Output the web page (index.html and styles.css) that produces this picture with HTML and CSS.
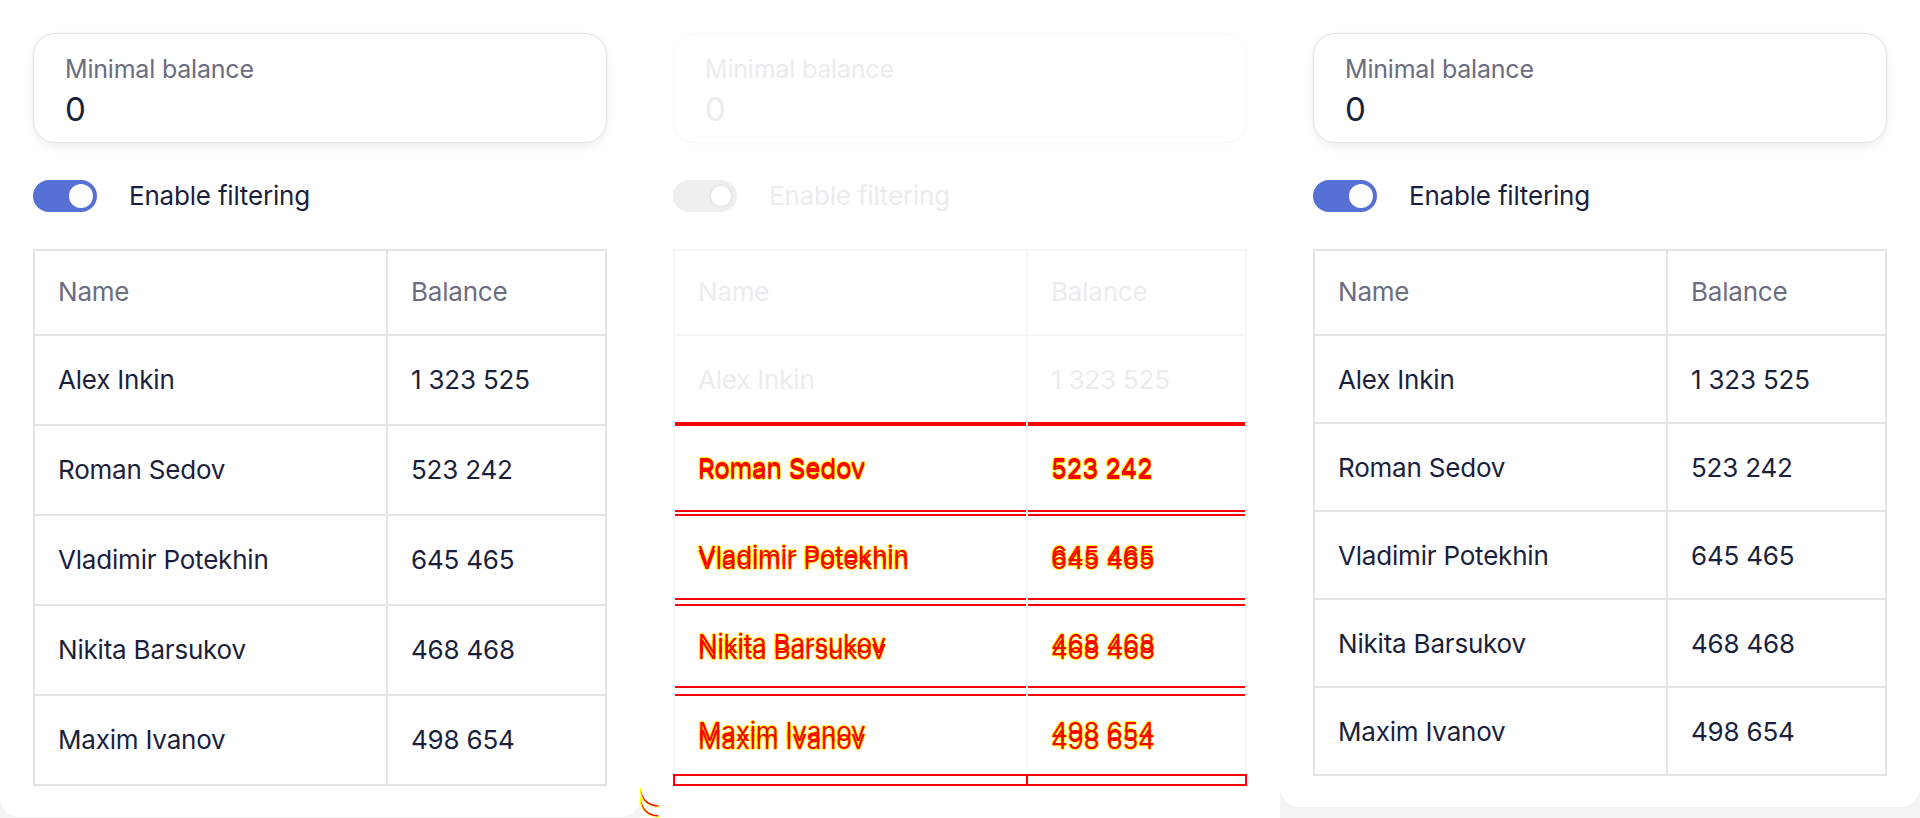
FILE: index.html
```html
<!DOCTYPE html>
<html lang="en">
<head>
<meta charset="utf-8">
<title>Table filtering</title>
<link rel="stylesheet" href="styles.css">
</head>
<body>
<div class="board">
  <!-- Panel 1 -->
  <section class="panel panel-tall">
    <div class="field">
      <div class="field-label">Minimal balance</div>
      <div class="field-value">0</div>
    </div>
    <div class="toggle-row">
      <span class="toggle"><span class="knob"></span></span>
      <span class="toggle-text">Enable filtering</span>
    </div>
    <table class="grid">
      <thead>
        <tr><th class="c1">Name</th><th>Balance</th></tr>
      </thead>
      <tbody>
        <tr><td>Alex Inkin</td><td>1 323 525</td></tr>
        <tr><td>Roman Sedov</td><td>523 242</td></tr>
        <tr><td>Vladimir Potekhin</td><td>645 465</td></tr>
        <tr><td>Nikita Barsukov</td><td>468 468</td></tr>
        <tr><td>Maxim Ivanov</td><td>498 654</td></tr>
      </tbody>
    </table>
  </section>

  <!-- Panel 2: visual diff -->
  <section class="panel panel-diff">
    <div class="field">
      <div class="field-label">Minimal balance</div>
      <div class="field-value">0</div>
    </div>
    <div class="toggle-row">
      <span class="toggle"><span class="knob"></span></span>
      <span class="toggle-text">Enable filtering</span>
    </div>
    <table class="grid">
      <thead>
        <tr><th class="c1">Name</th><th>Balance</th></tr>
      </thead>
      <tbody>
        <tr><td>Alex Inkin</td><td>1 323 525</td></tr>
        <tr class="d d1"><td><span class="dt">Roman Sedov</span></td><td><span class="dt">523 242</span></td></tr>
        <tr class="d d2"><td><span class="dt">Vladimir Potekhin</span></td><td><span class="dt">645 465</span></td></tr>
        <tr class="d d3"><td><span class="dt">Nikita Barsukov</span></td><td><span class="dt">468 468</span></td></tr>
        <tr class="d d4"><td><span class="dt">Maxim Ivanov</span></td><td><span class="dt">498 654</span></td></tr>
      </tbody>
    </table>
    <div class="tail"><span class="tail-cell"></span><span class="tail-cell tail-last"></span></div>
    <svg class="corner-diff" width="24" height="30" viewBox="0 0 24 30" aria-hidden="true">
      <path d="M1 0 C1 10 6 17 20 18 L20 19.5 C5 18.5 -0.5 11 -0.5 0 Z" fill="#ffff00"/>
      <path d="M1 1 C2 10 7 16.5 19 17.5 L17 18.5 C5 17.5 1 10 1 1 Z" fill="#ff0000"/>
      <path d="M1 9 C2 20 7 27 20 28 L20 29.5 C5 28.5 -0.5 21 -0.5 9 Z" fill="#ffff00"/>
      <path d="M1 10 C2 20 7 26.5 19 27.5 L17 28.5 C5 27.5 1 20 1 10 Z" fill="#ff0000"/>
    </svg>
  </section>

  <!-- Panel 3 -->
  <section class="panel panel-short">
    <div class="field">
      <div class="field-label">Minimal balance</div>
      <div class="field-value">0</div>
    </div>
    <div class="toggle-row">
      <span class="toggle"><span class="knob"></span></span>
      <span class="toggle-text">Enable filtering</span>
    </div>
    <table class="grid">
      <thead>
        <tr><th class="c1">Name</th><th>Balance</th></tr>
      </thead>
      <tbody>
        <tr><td>Alex Inkin</td><td>1 323 525</td></tr>
        <tr><td>Roman Sedov</td><td>523 242</td></tr>
        <tr><td>Vladimir Potekhin</td><td>645 465</td></tr>
        <tr><td>Nikita Barsukov</td><td>468 468</td></tr>
        <tr><td>Maxim Ivanov</td><td>498 654</td></tr>
      </tbody>
    </table>
  </section>
</div>
</body>
</html>
```

FILE: styles.css
```css
* { box-sizing: border-box; }

html, body {
  margin: 0;
  padding: 0;
}

body {
  background: #f4f4f5;
  font-family: Inter, "Noto Sans", "Liberation Sans", sans-serif;
  color: #1b1f3b;
  width: 1920px;
  height: 818px;
  overflow: hidden;
}

.board {
  display: grid;
  grid-template-columns: repeat(3, 640px);
  align-items: start;
  height: 818px;
}

.panel {
  background: #ffffff;
  padding: 33px 33px 31px;
  border-radius: 0 0 20px 20px;
}

/* input field */
.field {
  height: 110px;
  border: 1px solid #e1e1e4;
  border-radius: 22px;
  background: #fff;
  box-shadow: 0 4px 10px rgba(0, 0, 0, 0.07);
  padding: 20px 31px 0;
  display: flex;
  flex-direction: column;
}

.field-label {
  font-size: 25px;
  line-height: 30px;
  color: #6b6d80;
  letter-spacing: -0.2px;
}

.field-value {
  margin-top: 6px;
  font-size: 33px;
  line-height: 38px;
  color: #1b1f3b;
}

/* toggle */
.toggle-row {
  margin-top: 37px;
  height: 32px;
  display: flex;
  align-items: center;
  gap: 32px;
}

.toggle {
  width: 64px;
  height: 32px;
  border-radius: 16px;
  background: #5670d5;
  display: flex;
  align-items: center;
  justify-content: flex-end;
  padding-right: 4px;
}

.knob {
  width: 24px;
  height: 24px;
  border-radius: 50%;
  background: #fff;
}

.toggle-text {
  font-size: 26px;
  line-height: 32px;
  color: #1b1f3b;
  letter-spacing: -0.2px;
}

/* table */
.grid {
  margin-top: 37px;
  width: 574px;
  table-layout: fixed;
  border-collapse: separate;
  border-spacing: 0;
  border-left: 2px solid #e4e4e6;
  border-top: 2px solid #e4e4e6;
}

.grid th,
.grid td {
  border-right: 2px solid #e4e4e6;
  border-bottom: 2px solid #e4e4e6;
  text-align: left;
  font-size: 26px;
  line-height: 32px;
  font-weight: 400;
  letter-spacing: -0.2px;
  padding: 28px 22px 28px 23px;
  white-space: nowrap;
  vertical-align: top;
}

.grid th.c1 { width: 353px; }

.grid th {
  color: #6b6d80;
  padding-top: 25px;
  padding-bottom: 26px;
}

.panel-short .grid td {
  padding-bottom: 26px;
}

/* diff panel */
.panel-diff {
  position: relative;
  height: 818px;
  border-radius: 0;
}

.panel-diff .field {
  border-color: #f8f8f8;
  box-shadow: 0 4px 10px rgba(0, 0, 0, 0.012);
}

.panel-diff .field-label,
.panel-diff .field-value,
.panel-diff .toggle-text,
.panel-diff .grid th,
.panel-diff .grid tr:first-child td {
  color: #ececee;
}

.panel-diff .toggle {
  background: #efefef;
}

.panel-diff .knob {
  background: #fff;
  border: 2px solid #e8e8e8;
}

.panel-diff .grid,
.panel-diff .grid th,
.panel-diff .grid td {
  border-color: #f7f7f8;
}

.panel-diff .grid tr.d td {
  position: relative;
}

.panel-diff .grid tr.d td::before,
.panel-diff .grid tr.d td::after {
  content: "";
  position: absolute;
  left: 0;
  right: 0;
  height: 2px;
  background: #ff0000;
}

.panel-diff .grid tr.d td::before { top: -2px; }
.panel-diff .grid tr.d1 td::after { top: -4px; }
.panel-diff .grid tr.d2 td::after { top: -6px; }
.panel-diff .grid tr.d3 td::after { top: -8px; }
.panel-diff .grid tr.d4 td::after { top: -10px; }

/* differing text: red fill, yellow anti-alias fringe, shifted copy */
.dt {
  color: #ff0000;
}

.d1 .dt {
  text-shadow:
    0 -2px 0 #ff0000,
    1px 0 0 #ffff00, -1px 0 0 #ffff00, 0 1px 0 #ffff00,
    1px -2px 0 #ffff00, -1px -2px 0 #ffff00, 0 -3px 0 #ffff00;
}

.d2 .dt {
  text-shadow:
    0 -4px 0 #ff0000,
    1px 0 0 #ffff00, -1px 0 0 #ffff00, 0 1px 0 #ffff00,
    1px -4px 0 #ffff00, -1px -4px 0 #ffff00, 0 -5px 0 #ffff00;
}

.d3 .dt {
  text-shadow:
    0 -6px 0 #ff0000,
    1px 0 0 #ffff00, -1px 0 0 #ffff00, 0 1px 0 #ffff00,
    1px -6px 0 #ffff00, -1px -6px 0 #ffff00, 0 -7px 0 #ffff00;
}

.d4 .dt {
  text-shadow:
    0 -8px 0 #ff0000,
    1px 0 0 #ffff00, -1px 0 0 #ffff00, 0 1px 0 #ffff00,
    1px -8px 0 #ffff00, -1px -8px 0 #ffff00, 0 -9px 0 #ffff00;
}

.tail {
  display: grid;
  grid-template-columns: 353px 221px;
  height: 12px;
  margin-top: -12px;
  position: relative;
}

.tail-cell {
  border: 2px solid #ff0000;
  border-right: none;
}

.tail-cell.tail-last {
  border-right: 2px solid #ff0000;
}

.corner-diff {
  position: absolute;
  left: 0;
  bottom: 0;
}
```
